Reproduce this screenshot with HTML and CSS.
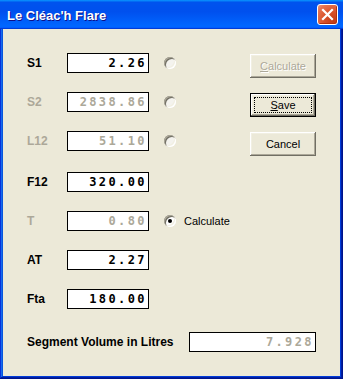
FILE: index.html
```html
<!DOCTYPE html>
<html>
  <head>
    <meta charset="utf-8">
    <title>Le Cléac'h Flare</title>
    <link rel="stylesheet" href="styles.css">
  </head>
  <body>
    <div class="window">
      <div class="titlebar">
        <span class="title">Le Cléac'h Flare</span>
        <span class="close">
          <svg width="13" height="13" viewBox="0 0 13 13">
            <path d="M2 2 L11 11 M11 2 L2 11" stroke="#fff" stroke-width="2.2" stroke-linecap="square"/>
          </svg>
        </span>
      </div>

      <div class="client">
        <div class="main">
          <div class="fields">
            <div class="row">
              <span class="lbl">S1</span>
              <span class="field">2.26</span>
              <span class="radio"></span>
            </div>
            <div class="row">
              <span class="lbl off">S2</span>
              <span class="field off">2838.86</span>
              <span class="radio"></span>
            </div>
            <div class="row">
              <span class="lbl off">L12</span>
              <span class="field off">51.10</span>
              <span class="radio"></span>
            </div>
            <div class="row wide">
              <span class="lbl">F12</span>
              <span class="field">320.00</span>
            </div>
            <div class="row">
              <span class="lbl off">T</span>
              <span class="field off">0.80</span>
              <span class="radio checked"></span>
              <span class="radio-text">Calculate</span>
            </div>
            <div class="row">
              <span class="lbl">AT</span>
              <span class="field">2.27</span>
            </div>
            <div class="row">
              <span class="lbl">Fta</span>
              <span class="field">180.00</span>
            </div>
          </div>

          <div class="buttons">
            <span class="btn disabled"><u>C</u>alculate</span>
            <span class="btn default"><u>S</u>ave</span>
            <span class="btn">Cancel</span>
          </div>
        </div>

        <div class="volume">
          <span class="lbl">Segment Volume in Litres</span>
          <span class="field off long">7.928</span>
        </div>
      </div>
    </div>
  </body>
</html>
```

FILE: styles.css
```css
html, body {margin:0;padding:0}

body {
  width: 343px;
  height: 379px;
  overflow: hidden;
  background: #fff;
}

.window {
  width: 343px;
  height: 379px;
  display: flex;
  flex-direction: column;
  background: #0054e3;
  box-shadow: inset -1px -1px #00138c, inset 1px 1px #0831d9, inset -2px -2px #001ea0, inset 2px 2px #166aee, inset -3px -3px #003bda, inset 3px 3px #0855dd;
}

/* title bar */
.titlebar {
  height: 29px;
  display: flex;
  align-items: center;
  justify-content: space-between;
  padding: 0 5px 0 7px;
  background: linear-gradient(180deg, #0997ff, #0053ee 8%, #0050ee 40%, #06f 88%, #06f 93%, #005bff 95%, #003dd7 96%, #003dd7);
}

.title {
  color: #fff;
  font-family: 'Liberation Sans', Arial, sans-serif;
  font-weight: bold;
  font-size: 13px;
  text-shadow: 1px 1px #0f1089;
  padding-top: 2px;
}

.close {
  width: 21px;
  height: 21px;
  box-sizing: border-box;
  border: 1px solid #fff;
  border-radius: 3px;
  display: flex;
  align-items: center;
  justify-content: center;
  background: radial-gradient(circle at 80% 85%, #c13b16 0%, #d9532c 45%, #e57350 80%, #ef9a7f 100%);
  box-shadow: inset -1px -1px #b2300f;
}

/* client area */
.client {
  flex: 1;
  margin: 0 3px 3px 3px;
  background: #ece9d8;
  font-family: 'Liberation Sans', Arial, sans-serif;
  font-size: 11px;
}

.main {
  display: flex;
  justify-content: space-between;
  padding: 24px 24px 0 24px;
}

.fields {
  display: flex;
  flex-direction: column;
  gap: 19px;
}

.row {
  display: flex;
  align-items: center;
  height: 20px;
}

.row.wide {
  margin-top: 2px;
}

.lbl {
  width: 40px;
  font-weight: bold;
  font-size: 12px;
  color: #000;
}

.off {
  color: #aca899;
}

.field {
  width: 82px;
  height: 20px;
  box-sizing: border-box;
  border: 1px solid #000;
  background: #fff;
  text-align: right;
  font-family: 'DejaVu Sans Mono', monospace;
  font-weight: bold;
  font-size: 12px;
  letter-spacing: 2.4px;
  line-height: 18px;
  padding-right: 1px;
}

.field.long {
  width: 127px;
}

.radio {
  width: 12px;
  height: 12px;
  margin-left: 15px;
  border-radius: 50%;
  background: #f4f3ee;
  box-shadow: inset 1px 1px #aca899, inset -1px -1px #fff, inset 2px 2px #716f64, inset -2px -2px #f1efe2;
  position: relative;
}

.radio.checked {
  background: #fff;
}

.radio.checked::after {
  content: "";
  position: absolute;
  left: 4px;
  top: 4px;
  width: 4px;
  height: 4px;
  border-radius: 50%;
  background: #000;
}

.radio-text {
  margin-left: 8px;
  color: #000;
}

/* buttons */
.buttons {
  display: flex;
  flex-direction: column;
  gap: 15px;
  padding-top: 1px;
}

.btn {
  width: 66px;
  height: 24px;
  box-sizing: border-box;
  display: flex;
  align-items: center;
  justify-content: center;
  position: relative;
  background: #ece9d8;
  color: #000;
  box-shadow: inset -1px -1px #716f64, inset 1px 1px #fff, inset -2px -2px #aca899, inset 2px 2px #f1efe2;
}

.btn.disabled {
  color: #aca899;
  text-shadow: 1px 1px #fff;
}

.btn.default {
  border: 1px solid #000;
}

.btn.default::after {
  content: "";
  position: absolute;
  left: 3px;
  top: 3px;
  right: 3px;
  bottom: 3px;
  border: 1px dotted #000;
}

/* volume row */
.volume {
  display: flex;
  align-items: center;
  justify-content: space-between;
  height: 20px;
  margin-top: 23px;
  padding: 0 24px 0 24px;
}

.volume .lbl {
  width: auto;
}
```
